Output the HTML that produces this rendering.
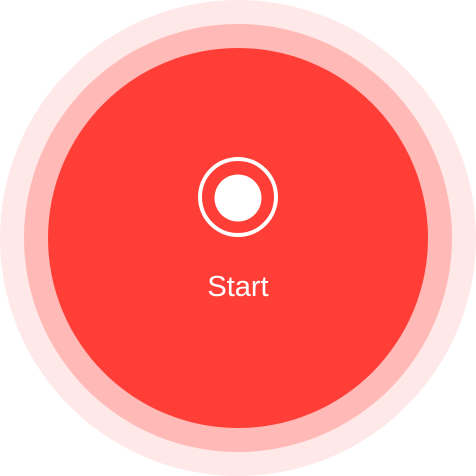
<!DOCTYPE html>
<html><head><style>
html,body{margin:0;padding:0;background:#fff;width:476px;height:476px;overflow:hidden}
.c{position:absolute;border-radius:50%}
</style></head><body>
<div class="c" style="left:0;top:0;width:476px;height:476px;background:#ffe8e8"></div>
<div class="c" style="left:24px;top:24px;width:428px;height:428px;background:#ffb9b6"></div>
<div class="c" style="left:48px;top:48px;width:380px;height:380px;background:#ff3f37"></div>
<svg style="position:absolute;left:0;top:0" width="476" height="476">
<circle cx="238" cy="197" r="38" fill="none" stroke="#fff" stroke-width="4"/>
<circle cx="238" cy="198" r="23.5" fill="#fff"/>
<text x="238" y="296" text-anchor="middle" font-family="Liberation Sans, sans-serif" font-size="29" fill="#fff">Start</text>
</svg>
</body></html>
